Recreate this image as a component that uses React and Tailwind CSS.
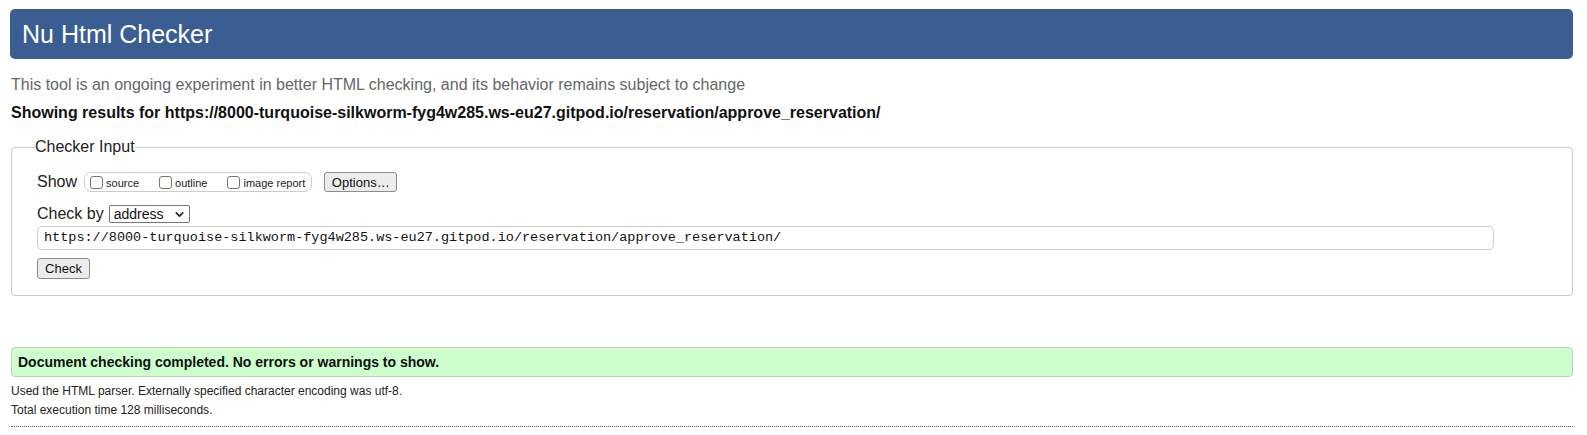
import { ChevronDown } from "lucide-react";

const sans = { fontFamily: '"Liberation Sans", Arial, sans-serif' };

function Box({ label }) {
  return (
    <label className="flex items-center gap-[3px]">
      <span className="w-[13px] h-[13px] rounded-[3px] border border-[#767676] bg-white" />
      <span className="text-[11px] text-[#222] mt-[2px]">{label}</span>
    </label>
  );
}

export default function App() {
  return (
    <div className="min-h-screen bg-white text-black pl-[10px] pr-[14px] pt-[9px]" style={sans}>
      <div className="h-[50px] rounded-[5px] bg-[#3a5e91] flex items-center pl-[12px]">
        <h1 className="text-[25px] text-white leading-none">Nu Html Checker</h1>
      </div>

      <p className="mt-[16px] ml-[1px] text-[16px] leading-[20px] text-[#666]">
        This tool is an ongoing experiment in better HTML checking, and its behavior remains subject to change
      </p>
      <p className="mt-[8px] ml-[1px] text-[16px] leading-[20px] font-bold text-[#111]">
        Showing results for https://8000-turquoise-silkworm-fyg4w285.ws-eu27.gitpod.io/reservation/approve_reservation/
      </p>

      <fieldset className="mt-[12px] ml-[1px] border border-[#ccc] rounded-[4px] pl-[25px] pr-[78px] pb-[16px]">
        <legend className="-ml-[2px] text-[16px] leading-[24px] text-[#222]">Checker Input</legend>

        <div className="mt-[12px] flex items-center h-[22px]">
          <span className="text-[16px] text-[#222]">Show</span>
          <div className="ml-[7px] h-[20px] rounded-[7px] border border-[#ccc] flex items-center pl-[5px] pr-[6px] gap-[20px]">
            <Box label="source" />
            <Box label="outline" />
            <Box label="image report" />
          </div>
          <button className="ml-[12px] h-[20px] w-[73px] rounded-[3px] border border-[#8c8c8c] bg-[#ececec] text-[13px] text-[#111] leading-none">
            Options…
          </button>
        </div>

        <div className="mt-[11px] flex items-center h-[20px]">
          <span className="text-[16px] text-[#222]">Check by</span>
          <div className="ml-[5px] w-[81px] h-[18px] border border-[#767676] rounded-[2px] flex items-center justify-between pl-[4px] pr-[3px] bg-white">
            <span className="text-[14px] text-[#111] leading-none">address</span>
            <ChevronDown className="w-[13px] h-[13px] text-[#222]" strokeWidth={3} />
          </div>
        </div>

        <div className="mt-[2px] h-[24px] rounded-[5px] border border-[#ccc] flex items-center pl-[6px]">
          <span className="text-[13.5px] text-[#111]" style={{ fontFamily: '"Liberation Mono", "Courier New", monospace' }}>
            https://8000-turquoise-silkworm-fyg4w285.ws-eu27.gitpod.io/reservation/approve_reservation/
          </span>
        </div>

        <button className="mt-[8px] block h-[21px] w-[53px] rounded-[3px] border border-[#8c8c8c] bg-[#ececec] text-[13px] text-[#111] leading-none">
          Check
        </button>
      </fieldset>

      <div className="mt-[51px] ml-[1px] h-[30px] rounded-[4px] border-[1.5px] border-[#c8c8c8] bg-[#ccffcc] flex items-center pl-[6px]">
        <span className="text-[14px] font-bold text-[#111]">Document checking completed. No errors or warnings to show.</span>
      </div>

      <p className="mt-[5px] ml-[1px] text-[12px] leading-[19px] text-[#222]">
        Used the HTML parser. Externally specified character encoding was utf-8.
      </p>
      <p className="ml-[1px] text-[12px] leading-[19px] text-[#222]">Total execution time 128 milliseconds.</p>
      <div className="mt-[6px] ml-[1px] border-t border-dotted border-[#555]" />
    </div>
  );
}
